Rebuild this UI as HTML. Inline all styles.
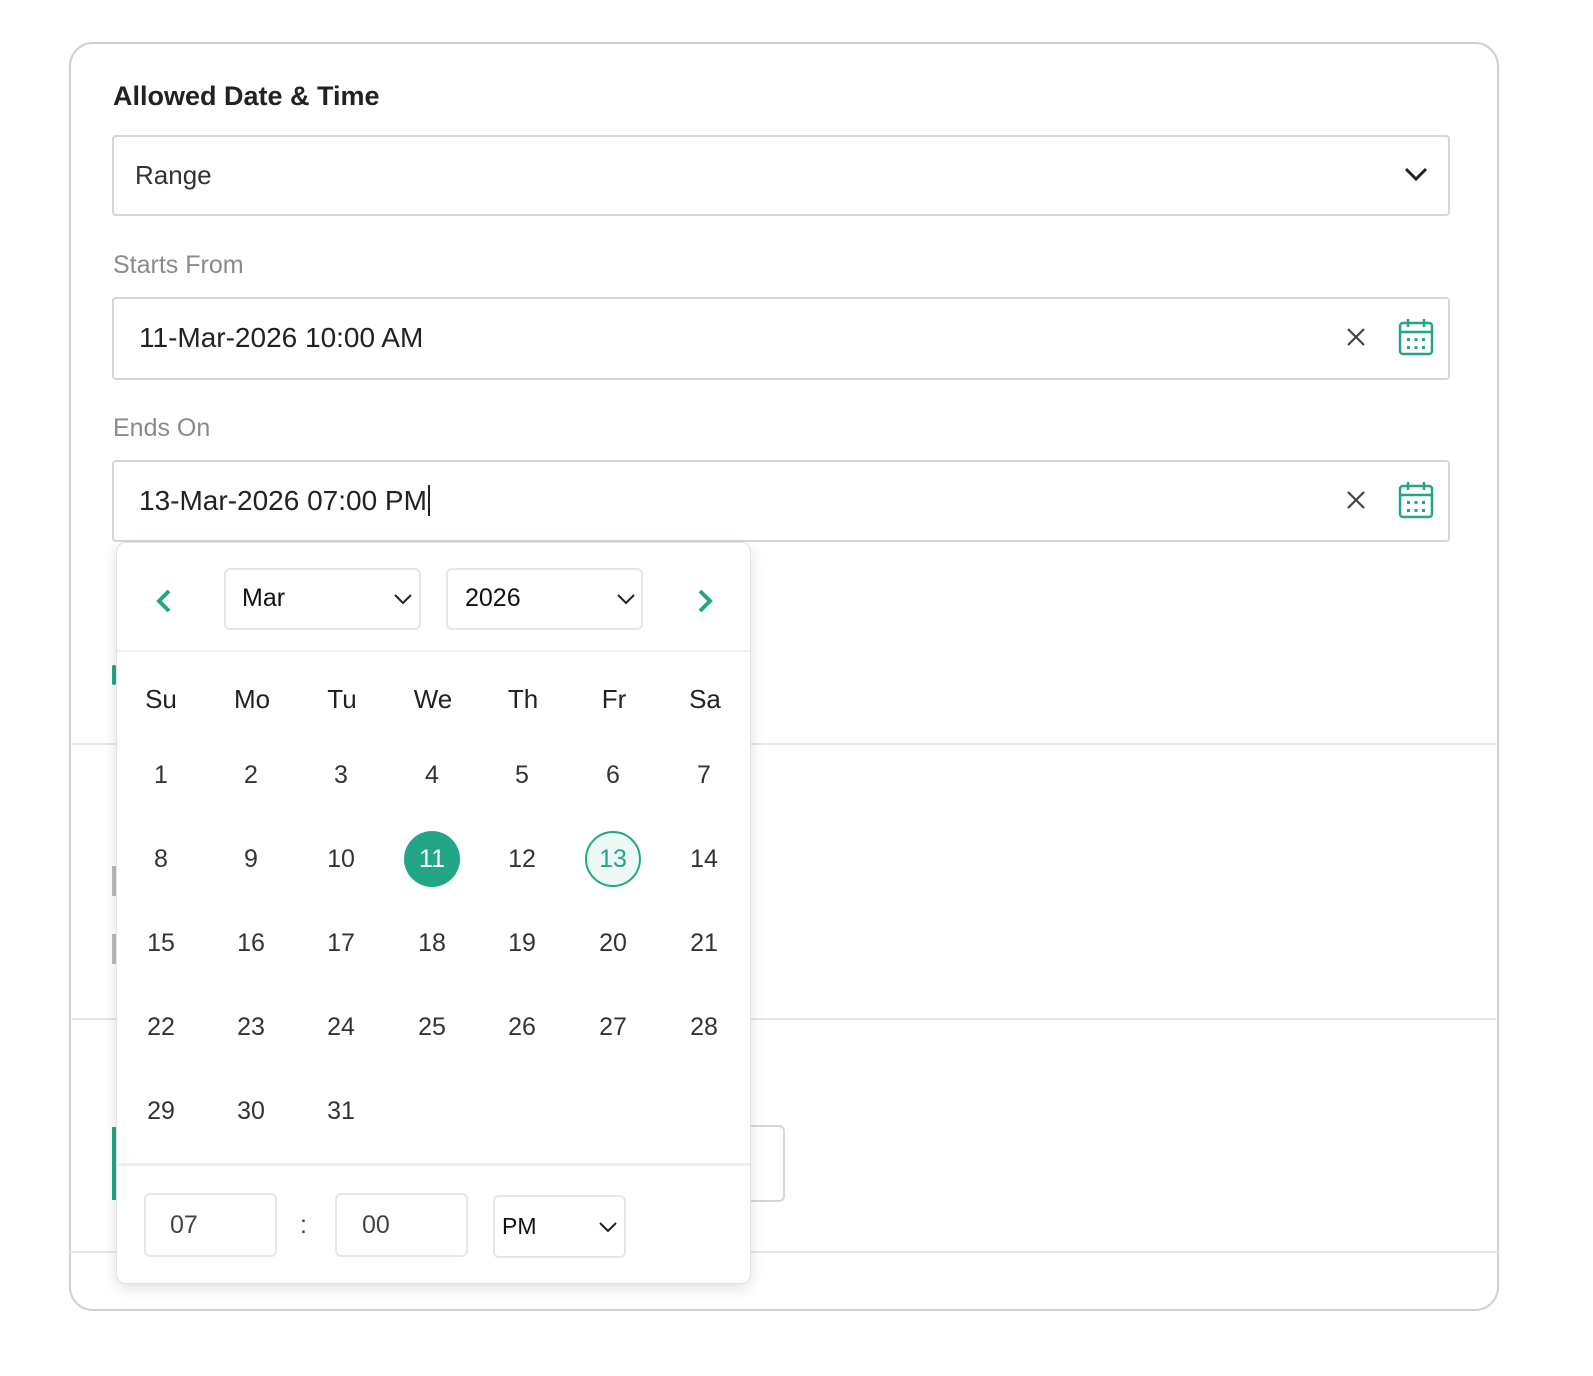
<!DOCTYPE html>
<html><head><meta charset="utf-8"><style>
*{box-sizing:border-box;margin:0;padding:0}
body{width:1593px;height:1376px;background:#fff;font-family:"Liberation Sans",sans-serif;position:relative;overflow:hidden;color:#222}
.a{position:absolute}
.card{left:69px;top:42px;width:1430px;height:1269px;border:2px solid #cfcfcf;border-radius:24px}
.hl{height:2px;background:#e6e6e6;left:70px;width:1428px}
.inp{border:2px solid #d6d6d6;border-radius:4px;background:#fff}
.lbl{font-size:25px;color:#8a8a8a}
.pop{left:116px;top:542px;width:635px;height:742px;background:#fff;border:1px solid #e2e2e2;border-radius:10px;box-shadow:0 4px 14px rgba(0,0,0,.12)}
.sel{border:2px solid #e6e6e6;border-radius:6px;background:#fff;font-size:25px;color:#111}
.d{position:absolute;width:56px;height:56px;margin-left:-28px;margin-top:-28px;line-height:56px;text-align:center;font-size:25px;color:#333}
.h{font-size:26px;color:#222}
</style></head><body>
<div class="a card"></div>
<div class="a hl" style="top:743px"></div>
<div class="a hl" style="top:1018px"></div>
<div class="a hl" style="top:1251px"></div>
<div class="a" style="left:112px;top:1127px;width:4px;height:73px;background:#23a687"></div>
<div class="a" style="left:700px;top:1125px;width:85px;height:77px;border:2px solid #d6d6d6;border-left:none;border-radius:0 6px 6px 0"></div>
<div class="a" style="left:112px;top:665px;width:4px;height:20px;background:#23a687;border-radius:2px"></div>
<div class="a" style="left:112px;top:866px;width:4px;height:30px;background:#bbb"></div>
<div class="a" style="left:112px;top:934px;width:4px;height:30px;background:#bbb"></div>

<div class="a" style="left:113px;top:81px;font-size:27px;font-weight:bold;color:#222">Allowed Date &amp; Time</div>
<div class="a inp" style="left:112px;top:135px;width:1338px;height:81px"></div>
<div class="a" style="left:135px;top:160px;font-size:26px;color:#333">Range</div>
<svg class="a" style="left:1403px;top:165px" width="26" height="18" viewBox="0 0 26 18"><path d="M3 4l10 10 10-10" fill="none" stroke="#222" stroke-width="3"/></svg>

<div class="a lbl" style="left:113px;top:251px">Starts From</div>
<div class="a inp" style="left:112px;top:297px;width:1338px;height:83px"></div>
<div class="a" style="left:139px;top:322px;font-size:28px;color:#222">11-Mar-2026 10:00 AM</div>

<div class="a lbl" style="left:113px;top:414px">Ends On</div>
<div class="a inp" style="left:112px;top:460px;width:1338px;height:82px"></div>
<div class="a" style="left:139px;top:485px;font-size:28px;color:#222">13-Mar-2026 07:00 PM<span style="border-left:2px solid #222;margin-left:1px"></span></div>

<svg class="a" style="left:1346px;top:327px" width="20" height="20" viewBox="0 0 20 20"><path d="M2 2l16 16M18 2L2 18" stroke="#444" stroke-width="2.2"/></svg>
<svg class="a" style="left:1346px;top:490px" width="20" height="20" viewBox="0 0 20 20"><path d="M2 2l16 16M18 2L2 18" stroke="#444" stroke-width="2.2"/></svg>
<svg class="a" style="left:1398px;top:318px" width="36" height="38" viewBox="0 0 36 38"><rect x="2" y="5" width="32" height="31" rx="3" fill="none" stroke="#23a687" stroke-width="2.5"/><path d="M2 14h32M10 1v8M26 1v8" stroke="#23a687" stroke-width="2.5"/><g fill="#23a687"><rect x="9" y="20" width="3" height="3"/><rect x="16.5" y="20" width="3" height="3"/><rect x="24" y="20" width="3" height="3"/><rect x="9" y="28" width="3" height="3"/><rect x="16.5" y="28" width="3" height="3"/><rect x="24" y="28" width="3" height="3"/></g></svg>
<svg class="a" style="left:1398px;top:481px" width="36" height="38" viewBox="0 0 36 38"><rect x="2" y="5" width="32" height="31" rx="3" fill="none" stroke="#23a687" stroke-width="2.5"/><path d="M2 14h32M10 1v8M26 1v8" stroke="#23a687" stroke-width="2.5"/><g fill="#23a687"><rect x="9" y="20" width="3" height="3"/><rect x="16.5" y="20" width="3" height="3"/><rect x="24" y="20" width="3" height="3"/><rect x="9" y="28" width="3" height="3"/><rect x="16.5" y="28" width="3" height="3"/><rect x="24" y="28" width="3" height="3"/></g></svg>

<div class="a pop"></div>
<svg class="a" style="left:154px;top:588px" width="20" height="26" viewBox="0 0 20 26"><path d="M15 3L5 13l10 10" fill="none" stroke="#23a687" stroke-width="4"/></svg>
<svg class="a" style="left:695px;top:588px" width="20" height="26" viewBox="0 0 20 26"><path d="M5 3l10 10L5 23" fill="none" stroke="#23a687" stroke-width="4"/></svg>
<div class="a sel" style="left:224px;top:568px;width:197px;height:62px"></div>
<div class="a" style="left:242px;top:584px;font-size:25px;color:#111">Mar</div>
<svg class="a" style="left:393px;top:592px" width="20" height="14" viewBox="0 0 20 14"><path d="M2 3l8 8 8-8" fill="none" stroke="#222" stroke-width="2"/></svg>
<div class="a sel" style="left:446px;top:568px;width:197px;height:62px"></div>
<div class="a" style="left:465px;top:584px;font-size:25px;color:#111">2026</div>
<svg class="a" style="left:616px;top:592px" width="20" height="14" viewBox="0 0 20 14"><path d="M2 3l8 8 8-8" fill="none" stroke="#222" stroke-width="2"/></svg>
<div class="a" style="left:117px;top:650px;width:633px;height:2px;background:#f0f0f0"></div>
<div class="a" style="left:117px;top:1163px;width:633px;height:3px;background:#efefef"></div>

<div class="d h" style="left:161px;top:699px">Su</div><div class="d h" style="left:252px;top:699px">Mo</div><div class="d h" style="left:342px;top:699px">Tu</div><div class="d h" style="left:433px;top:699px">We</div><div class="d h" style="left:523px;top:699px">Th</div><div class="d h" style="left:614px;top:699px">Fr</div><div class="d h" style="left:705px;top:699px">Sa</div>

<div class="d" style="left:161px;top:775px">1</div><div class="d" style="left:251px;top:775px">2</div><div class="d" style="left:341px;top:775px">3</div><div class="d" style="left:432px;top:775px">4</div><div class="d" style="left:522px;top:775px">5</div><div class="d" style="left:613px;top:775px">6</div><div class="d" style="left:704px;top:775px">7</div>
<div class="d" style="left:161px;top:859px">8</div><div class="d" style="left:251px;top:859px">9</div><div class="d" style="left:341px;top:859px">10</div><div class="d" style="left:432px;top:859px;background:#23a687;color:#fff;border-radius:50%">11</div><div class="d" style="left:522px;top:859px">12</div><div class="d" style="left:613px;top:859px;border:2px solid #23a687;background:#eef8f5;color:#23a687;border-radius:50%;line-height:52px">13</div><div class="d" style="left:704px;top:859px">14</div>
<div class="d" style="left:161px;top:943px">15</div><div class="d" style="left:251px;top:943px">16</div><div class="d" style="left:341px;top:943px">17</div><div class="d" style="left:432px;top:943px">18</div><div class="d" style="left:522px;top:943px">19</div><div class="d" style="left:613px;top:943px">20</div><div class="d" style="left:704px;top:943px">21</div>
<div class="d" style="left:161px;top:1027px">22</div><div class="d" style="left:251px;top:1027px">23</div><div class="d" style="left:341px;top:1027px">24</div><div class="d" style="left:432px;top:1027px">25</div><div class="d" style="left:522px;top:1027px">26</div><div class="d" style="left:613px;top:1027px">27</div><div class="d" style="left:704px;top:1027px">28</div>
<div class="d" style="left:161px;top:1111px">29</div><div class="d" style="left:251px;top:1111px">30</div><div class="d" style="left:341px;top:1111px">31</div>

<div class="a sel" style="left:144px;top:1193px;width:133px;height:64px"></div>
<div class="a" style="left:170px;top:1211px;font-size:25px;color:#444">07</div>
<div class="a" style="left:300px;top:1211px;font-size:25px;color:#444">:</div>
<div class="a sel" style="left:335px;top:1193px;width:133px;height:64px"></div>
<div class="a" style="left:362px;top:1211px;font-size:25px;color:#444">00</div>
<div class="a sel" style="left:493px;top:1195px;width:133px;height:63px"></div>
<div class="a" style="left:502px;top:1213px;font-size:23px;color:#111">PM</div>
<svg class="a" style="left:598px;top:1220px" width="20" height="14" viewBox="0 0 20 14"><path d="M2 3l8 8 8-8" fill="none" stroke="#222" stroke-width="2"/></svg>
</body></html>
